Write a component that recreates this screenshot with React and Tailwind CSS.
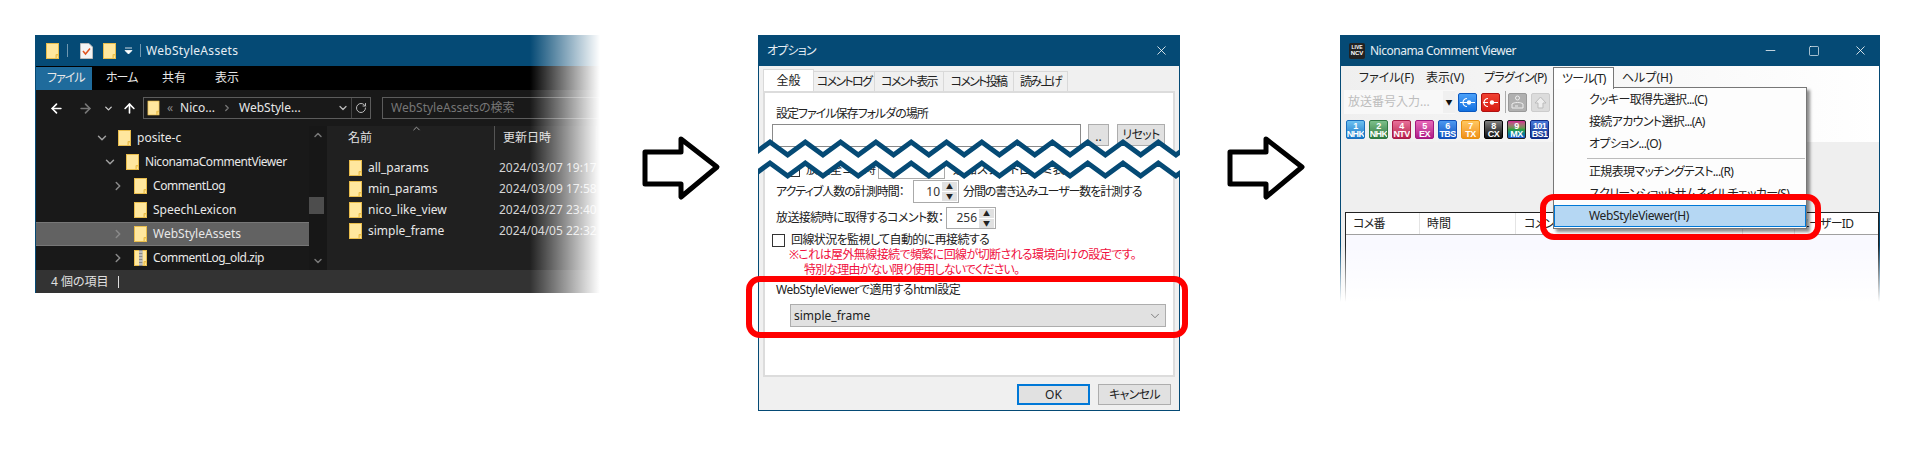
import React from "react";
import { ArrowLeft, ArrowRight, ArrowUp, ChevronDown, ChevronRight, ChevronUp, RotateCw, X, Minus, Square } from "lucide-react";

const Folder = ({ zip }) => (
  <svg width="13" height="16" viewBox="0 0 13 16" className="shrink-0">
    <rect x="0.5" y="0.5" width="12" height="15" fill="#ffe79e" stroke="#e9bd4c" />
    <path d="M10 15.5V11.5H12.5" fill="#f6cf62" stroke="#e9bd4c" />
    {zip && <rect x="5" y="0" width="3.5" height="16" fill="#8a8a8a" />}
    {zip && <path d="M5 2h3.5M5 5h3.5M5 8h3.5M5 11h3.5M5 14h3.5" stroke="#eee" />}
  </svg>
);

const Arrow = ({ className }) => (
  <svg width="82" height="68" viewBox="0 0 82 68" className={className}>
    <path d="M4 18H40V5L76 33L40 63V50H4Z" fill="#fff" stroke="#000" strokeWidth="5" strokeLinejoin="round" />
  </svg>
);

const TreeRow = ({ indent, name, selected, chevron, zip, narrow }) => (
  <div className={"flex items-center h-6 " + (selected ? "bg-[#626262] border-y border-[#777]" : "")} style={{ paddingLeft: indent }}>
    <span className="w-4 shrink-0 flex justify-center text-[#8a8a8a]">
      {chevron === "down" && <ChevronDown size={14} strokeWidth={2.5} className="text-[#a0a0a0]" />}
      {chevron === "right" && <ChevronRight size={14} strokeWidth={2.5} />}
    </span>
    <span className="ml-[8px]"><Folder zip={zip} /></span>
    <span className={"ml-[6px] text-[#e8e8e8] whitespace-nowrap " + (narrow ? "tracking-[-0.45px]" : "")}>{name}</span>
  </div>
);

const FileRow = ({ name, date }) => (
  <div className="flex items-center h-[21px]">
    <span className="ml-[22px]"><Folder /></span>
    <span className="ml-[6px] w-[131px] text-[#e8e8e8]">{name}</span>
    <span className="text-[#d4d4d4] whitespace-nowrap">{date}</span>
  </div>
);

const Explorer = () => (
  <div className="relative w-[565px] h-[258px] shrink-0 bg-[#191919] border-b-2 border-l border-[#054a75] text-[12px]">
    <div className="flex items-center h-[31px] bg-[#054a75] text-[#e6eef4] pl-[10px]">
      <Folder />
      <span className="ml-[8px] w-px h-[13px] bg-[#6f97b0]" />
      <svg width="13" height="16" viewBox="0 0 13 16" className="ml-[12px]">
        <path d="M.5.5H9L12.5 4V15.5H.5Z" fill="#f4f4f4" stroke="#bbb" />
        <path d="M3 8L5.5 11L10 5.5" fill="none" stroke="#e0531f" strokeWidth="1.5" />
      </svg>
      <span className="ml-[10px]"><Folder /></span>
      <svg width="9" height="8" viewBox="0 0 9 8" className="ml-[8px]">
        <path d="M1 1H8M1 3.5H8L4.5 7Z" fill="#fff" stroke="#fff" strokeWidth=".8" />
      </svg>
      <span className="ml-[7px] w-px h-[13px] bg-[#6f97b0]" />
      <span className="ml-[5px] tracking-[0.3px]">WebStyleAssets</span>
    </div>
    <div className="flex items-center h-[24px] bg-black text-[#e8e8e8]">
      <span className="flex items-center w-[56px] h-[23px] bg-[#1f6b9c] pl-[11px] tracking-[-1px]">ファイル</span>
      <span className="ml-[14px] w-[56px] tracking-[-1px]">ホーム</span>
      <span className="w-[53px]">共有</span>
      <span>表示</span>
    </div>
    <div className="flex items-center h-[36px] text-[#e8e8e8]">
      <ArrowLeft size={15} strokeWidth={2.6} className="ml-[13px] text-white" />
      <ArrowRight size={15} strokeWidth={2.6} className="ml-[14px] text-[#777]" />
      <ChevronDown size={11} strokeWidth={3} className="ml-[10px] text-[#ccc]" />
      <ArrowUp size={15} strokeWidth={2.6} className="ml-[8px] text-white" />
      <div className="flex items-center ml-[6px] w-[228px] h-[22px] border border-[#5c5c5c] pl-[3px]">
        <span className="scale-[0.94]"><Folder /></span>
        <span className="ml-[7px] text-[#888]">«</span>
        <span className="ml-[7px]">Nico...</span>
        <ChevronRight size={10} strokeWidth={3} className="ml-[7px] text-[#777]" />
        <span className="ml-[7px]">WebStyle...</span>
        <ChevronDown size={12} strokeWidth={2.5} className="ml-auto text-[#bbb]" />
        <span className="ml-[2px] w-px h-full bg-[#444]" />
        <RotateCw size={12} strokeWidth={2} className="mx-[3px] text-[#bbb]" />
      </div>
      <div className="flex items-center ml-[11px] flex-1 h-[22px] border border-[#5c5c5c] pl-[8px] text-[#767676]">WebStyleAssetsの検索</div>
    </div>
    <div className="flex h-[144px]">
      <div className="w-[273px] shrink-0 overflow-hidden">
        <TreeRow indent={58} chevron="down" name="posite-c" />
        <TreeRow indent={66} chevron="down" name="NiconamaCommentViewer" narrow />
        <TreeRow indent={74} chevron="right" name="CommentLog" narrow />
        <TreeRow indent={74} name="SpeechLexicon" />
        <TreeRow indent={74} chevron="right" name="WebStyleAssets" selected />
        <TreeRow indent={74} chevron="right" name="CommentLog_old.zip" zip narrow />
      </div>
      <div className="w-[18px] shrink-0 bg-[#171717] flex flex-col items-center pt-[3px] text-[#777]">
        <ChevronUp size={12} strokeWidth={3} />
        <div className="mt-[56px] w-[15px] h-[17px] bg-[#4d4d4d] self-start" />
        <ChevronDown size={12} strokeWidth={3} className="mt-[41px]" />
      </div>
      <div className="flex-1 bg-[#202020]">
        <div className="relative flex items-center h-[24px] text-[#e0e0e0]">
          <span className="ml-[21px] w-[146px]">名前</span>
          <span className="w-px h-[24px] bg-[#555]" />
          <span className="ml-[8px] w-[93px]">更新日時</span>
          <span className="w-px h-[24px] bg-[#444]" />
          <ChevronUp size={11} strokeWidth={2} className="absolute left-[84px] -top-[3px] text-[#aaa]" />
        </div>
        <div className="pt-[7px]">
          <FileRow name="all_params" date="2024/03/07 19:17" />
          <FileRow name="min_params" date="2024/03/09 17:58" />
          <FileRow name="nico_like_view" date="2024/03/27 23:40" />
          <FileRow name="simple_frame" date="2024/04/05 22:32" />
        </div>
      </div>
    </div>
    <div className="flex items-center h-[23px] bg-[#333] text-[#e0e0e0] pl-[15px]">
      4 個の項目
      <span className="ml-[9px] w-px h-[12px] bg-[#ddd]" />
    </div>
    <div className="absolute right-0 -top-px -bottom-[2px] w-[70px] bg-linear-to-r from-white/0 to-white" />
  </div>
);

const Spinner = ({ value, w }) => (
  <div className="flex items-center h-full border border-[#aaa] bg-white pr-px shrink-0" style={{ width: w }}>
    <span className="flex-1 text-right pr-[2px] text-[#333]">{value}</span>
    <div className="flex flex-col gap-px w-[15px] h-[19px]">
      <span className="flex-1 flex items-center justify-center bg-[#e1e1e1] text-[7px] leading-none">▲</span>
      <span className="flex-1 flex items-center justify-center bg-[#e1e1e1] text-[7px] leading-none">▼</span>
    </div>
  </div>
);

const Tab = ({ children, w }) => (
  <div className="flex items-center justify-center h-[20px] self-end border-t border-r border-[#d9d9d9] bg-[#f0f0f0] whitespace-nowrap tracking-[-1.7px]" style={{ width: w }}>{children}</div>
);

const zig = (a, b) => {
  const pts = [];
  for (let k = -1; k < 13; k++) {
    const x = 12 + 35.3 * k;
    pts.push([x, a], [x + 17.65, b]);
  }
  return pts;
};
const upper = zig(7, 20);
const lower = zig(28, 41);
const toStr = (p) => p.map((q) => q.join(",")).join(" ");

const Dialog = () => (
  <div className="relative w-[422px] h-[376px] shrink-0 bg-[#f0f0f0] border-x border-b border-[#054a75] text-[12px] text-[#222]">
    <div className="flex items-center justify-between h-[31px] -mx-px bg-[#054a75] text-[#e6eef4] pl-[9px] pr-[11px]">
      <span className="tracking-[-0.8px]">オプション</span>
      <X size={15} strokeWidth={1.3} className="text-white" />
    </div>
    <div className="flex h-[25px] pl-[4px] pt-[3px]">
      <div className="flex items-center justify-center w-[51px] h-[22px] bg-white border-x border-t border-[#d9d9d9] -mb-px z-10">全般</div>
      <Tab w={61}>コメントログ</Tab>
      <Tab w={69}>コメント表示</Tab>
      <Tab w={70}>コメント投稿</Tab>
      <Tab w={54}>読み上げ</Tab>
    </div>
    <div className="mx-[4px] h-[286px] bg-white border-2 border-[#dcdcdc] pl-[7px]">
      <div className="flex items-center mt-[12px] h-[18px] pl-[4px] tracking-[-1px]">設定ファイル保存フォルダの場所</div>
      <div className="flex items-start mt-[1px] h-[24px]">
        <div className="w-[309px] h-[23px] border border-[#8a8a8a]" />
        <div className="ml-[7px] flex items-end justify-center pb-[2px] w-[21px] h-[22px] bg-[#e1e1e1] border border-[#adadad]">..</div>
        <div className="ml-[8px] flex items-center justify-center w-[48px] h-[22px] bg-[#e1e1e1] border border-[#adadad] tracking-[-0.7px]">リセット</div>
      </div>
      <div className="flex items-center mt-[13px] h-[18px] pl-[15px]">
        <span className="w-[13px] h-[13px] border border-[#333] shrink-0" />
        <span className="ml-[6px] w-[72px] whitespace-nowrap">放送全コメ時</span>
        <div className="w-[67px] h-[18px] border border-[#aaa]" />
        <span className="ml-[8px]">通知スタート口コミ表示</span>
      </div>
      <div className="flex items-center mt-[1px] h-[23px] pl-[4px]">
        <span className="w-[137px] shrink-0 whitespace-nowrap tracking-[-1px]">アクティブ人数の計測時間：</span>
        <Spinner value="10" w={46} />
        <span className="ml-[4px] whitespace-nowrap tracking-[-1.1px]">分間の書き込みユーザー数を計測する</span>
      </div>
      <div className="flex items-center mt-[4px] h-[22px] pl-[4px]">
        <span className="w-[170px] shrink-0 whitespace-nowrap tracking-[-0.6px]">放送接続時に取得するコメント数：</span>
        <Spinner value="256" w={50} />
      </div>
      <div className="flex items-center mt-[4px] h-[14px]">
        <span className="w-[13px] h-[13px] border border-[#333] shrink-0" />
        <span className="ml-[6px] whitespace-nowrap tracking-[-0.6px]">回線状況を監視して自動的に再接続する</span>
      </div>
      <div className="h-[15px] pl-[17px] flex items-center text-[#f01040] whitespace-nowrap tracking-[-0.6px]">※これは屋外無線接続で頻繁に回線が切断される環境向けの設定です。</div>
      <div className="h-[15px] pl-[32px] flex items-center text-[#f01040] whitespace-nowrap tracking-[-0.85px]">特別な理由がない限り使用しないでください。</div>
      <div className="h-[16px] mt-[5px] pl-[4px] flex items-center whitespace-nowrap tracking-[-0.5px]">WebStyleViewerで適用するhtml設定</div>
      <div className="flex items-center justify-between mt-[6px] ml-[18px] w-[376px] h-[23px] bg-[#e1e1e1] border border-[#adadad] pl-[3px] pr-[3px]">
        simple_frame
        <ChevronDown size={14} strokeWidth={1.2} className="text-[#555]" />
      </div>
    </div>
    <div className="flex justify-end gap-[8px] pt-[7px] pr-[8px]">
      <div className="flex items-center justify-center w-[73px] h-[21px] bg-[#e1e1e1] border-2 border-[#0078d7]">OK</div>
      <div className="flex items-center justify-center w-[73px] h-[21px] bg-[#e1e1e1] border border-[#adadad] tracking-[-0.7px]">キャンセル</div>
    </div>
    <svg width="422" height="50" viewBox="0 0 422 50" className="absolute -left-px top-[100px]">
      <polygon points={toStr(upper) + " " + toStr([...lower].reverse())} fill="#fff" />
      <polyline points={toStr(upper)} fill="none" stroke="#054a75" strokeWidth="5" />
      <polyline points={toStr(lower)} fill="none" stroke="#054a75" strokeWidth="5" />
    </svg>
    <div className="absolute -left-[13px] top-[241px] w-[442px] h-[62px] border-[6px] border-[#ff0000] rounded-[14px]" />
  </div>
);

const channels = [
  ["1", "NHK", "from-[#6cc0f0] to-[#1878c8]", "border-[#1a6fc0]"],
  ["2", "NHK", "from-[#7cc08a] to-[#2f7a42]", "border-[#2f7a42]"],
  ["4", "NTV", "from-[#e8709a] to-[#b81c4c]", "border-[#a81c48]"],
  ["5", "EX", "from-[#e868b8] to-[#b01888]", "border-[#a01880]"],
  ["6", "TBS", "from-[#4c98f0] to-[#1050c0]", "border-[#1050b8]"],
  ["7", "TX", "from-[#ffc860] to-[#f09010]", "border-[#e89010]"],
  ["8", "CX", "from-[#808080] to-[#101010]", "border-[#000]"],
  ["9", "MX", "from-[#d02090] via-[#30a040] to-[#2050d0]", "border-[#222]"],
  ["101", "BS1", "from-[#4878d8] to-[#102c88]", "border-[#102c88]"],
];

const Channel = ({ n, name, grad, bd }) => (
  <div className={"flex flex-col items-center justify-center w-[19px] h-[19px] rounded-[2px] border bg-linear-to-b text-white font-bold font-['Liberation_Sans',sans-serif] text-[9px] leading-[8px] tracking-[-0.6px] overflow-hidden " + grad + " " + bd}>
    <span>{n}</span>
    <span>{name}</span>
  </div>
);

const MenuItem = ({ children }) => (
  <div className="flex items-center h-[22px] pl-[35px] whitespace-nowrap tracking-[-0.65px]">{children}</div>
);

const NcvWindow = () => (
  <div className="relative w-[540px] h-[267px] shrink-0 bg-[#efefef] border-x border-[#054a75] text-[12px] text-[#222]">
    <div className="flex items-center h-[31px] -mx-px bg-[#054a75] text-[#e6eef4] pl-[9px]">
      <div className="flex flex-col items-center justify-center w-[16px] h-[16px] rounded-[2px] bg-[#222] text-white font-bold font-['Liberation_Sans',sans-serif] leading-none">
        <span className="text-[5px]">LIVE</span>
        <span className="text-[6px]">NCV</span>
      </div>
      <span className="ml-[5px] tracking-[-0.5px]">Niconama Comment Viewer</span>
      <Minus size={15} strokeWidth={1.2} className="ml-auto mr-[30px] text-white" />
      <Square size={12} strokeWidth={1.3} className="mr-[33px] text-white" />
      <X size={15} strokeWidth={1.3} className="mr-[12px] text-white" />
    </div>
    <div className="h-[76px] bg-linear-to-r from-[#efefef] to-white">
      <div className="flex items-center h-[23px] pl-[18px]">
        <span className="w-[67px]">ファイル(F)</span>
        <span className="w-[58px]">表示(V)</span>
        <span className="w-[69px] tracking-[-0.7px]">プラグイン(P)</span>
        <span className="relative z-10 flex items-center w-[61px] h-[22px] self-end border-x border-t border-[#777] bg-white pl-[8px] whitespace-nowrap tracking-[-0.7px]">ツール(T)</span>
        <span className="ml-[8px]">ヘルプ(H)</span>
      </div>
      <div className="flex items-center h-[26px] pl-[3px]">
        <div className="flex items-center w-[111px] h-[24px] bg-[#f8f8f8] text-[#bdbdbd] pl-[4px] whitespace-nowrap">
          放送番号入力...
          <span className="ml-auto flex items-center justify-center w-[12px] h-[22px] bg-[#f0f0f0] text-[#111] text-[7px]">▼</span>
        </div>
        <div className="ml-[3px] flex items-center justify-center w-[19px] h-[19px] rounded-[2px] border border-[#0a58c0] bg-linear-to-b from-[#4aa0f8] to-[#1070e0]">
          <svg width="15" height="11" viewBox="0 0 15 11"><path d="M0 5.5H15M7 1.5A4 4 0 0 0 7 9.5" fill="none" stroke="#fff" strokeWidth="1.2" /><circle cx="9" cy="5.5" r="2.2" fill="#fff" /></svg>
        </div>
        <div className="ml-[4px] flex items-center justify-center w-[19px] h-[19px] rounded-[2px] border border-[#b01010] bg-linear-to-b from-[#f04030] to-[#d81810]">
          <svg width="15" height="11" viewBox="0 0 15 11"><path d="M0 5.5H5M9 5.5H15M5 1.5A4 4 0 0 0 5 9.5" fill="none" stroke="#fff" strokeWidth="1.2" /><circle cx="9" cy="5.5" r="2.2" fill="#fff" /></svg>
        </div>
        <span className="ml-[5px] w-px h-[22px] bg-[#aaa]" />
        <div className="ml-[2px] flex items-center justify-center w-[19px] h-[19px] rounded-[2px] border border-[#999] bg-[#b0b0b0]">
          <svg width="15" height="15" viewBox="0 0 15 15"><circle cx="7.5" cy="3" r="2" fill="none" stroke="#eee" /><path d="M2 9C4 7 11 7 13 9V13H2Z" fill="none" stroke="#eee" /><path d="M5 11H8" stroke="#eee" /></svg>
        </div>
        <div className="ml-[4px] flex items-center justify-center w-[19px] h-[19px] rounded-[2px] border border-[#ccc] bg-[#dcdcdc]">
          <svg width="13" height="13" viewBox="0 0 13 13"><path d="M6.5 1L12 7H9V12H4V7H1Z" fill="#eee" stroke="#bbb" /></svg>
        </div>
      </div>
      <div className="flex gap-[4px] pl-[5px] pt-[5px]">
        {channels.map((c) => <Channel key={c[0]} n={c[0]} name={c[1]} grad={c[2]} bd={c[3]} />)}
      </div>
    </div>
    <div className="mt-[70px] ml-[4px] h-[90px] border-x border-t border-[#222] bg-[#f9f9ff]">
      <div className="flex items-center h-[22px] bg-white border-b border-[#a0a0a0]">
        <span className="w-[74px] pl-[7px] h-full flex items-center border-r border-[#e4e4e4] tracking-[-0.7px]">コメ番</span>
        <span className="w-[96px] pl-[7px] h-full flex items-center border-r border-[#e4e4e4]">時間</span>
        <span className="w-[227px] pl-[8px] h-full flex items-center border-r border-[#e4e4e4] tracking-[-0.7px]">コメント</span>
        <span className="w-[52px] h-full border-r border-[#e4e4e4]" />
        <span className="pl-[3px] tracking-[-0.7px]">ユーザーID</span>
      </div>
    </div>
    <div className="absolute left-[212px] top-[52px] w-[254px] h-[142px] bg-[#fdfdfd] border border-[#777] shadow-[3px_3px_3px_rgba(0,0,0,0.45)] pt-px">
      <MenuItem>クッキー取得先選択...(C)</MenuItem>
      <MenuItem>接続アカウント選択...(A)</MenuItem>
      <MenuItem>オプション...(O)</MenuItem>
      <div className="h-[6px] flex items-center ml-[33px] mr-px"><div className="w-full h-px bg-[#bbb]" /></div>
      <MenuItem>正規表現マッチングテスト...(R)</MenuItem>
      <MenuItem>スクリーンショットサムネイルチェッカー(S)</MenuItem>
      <div className="flex items-center h-[22px] pl-[34px] bg-[#b5d7f3] border border-[#0078d7] whitespace-nowrap tracking-[-0.35px]">WebStyleViewer(H)</div>
    </div>
    <div className="absolute left-[199px] top-[159px] w-[281px] h-[46px] border-[6px] border-[#ff0000] rounded-[14px]" />
    <div className="absolute -left-px -right-px top-[210px] bottom-0 bg-linear-to-b from-white/0 to-white" />
  </div>
);

export default function App() {
  return (
    <div className="flex items-start w-[1920px] h-[461px] bg-white pt-[35px] pl-[35px] overflow-hidden font-['Noto_Sans','Noto_Sans_CJK_JP',sans-serif] [font-feature-settings:'palt'] leading-none">
      <Explorer />
      <Arrow className="ml-[41px] mt-[99px] shrink-0" />
      <div className="ml-[35px] shrink-0"><Dialog /></div>
      <Arrow className="ml-[46px] mt-[99px] shrink-0" />
      <div className="ml-[32px] shrink-0"><NcvWindow /></div>
    </div>
  );
}
